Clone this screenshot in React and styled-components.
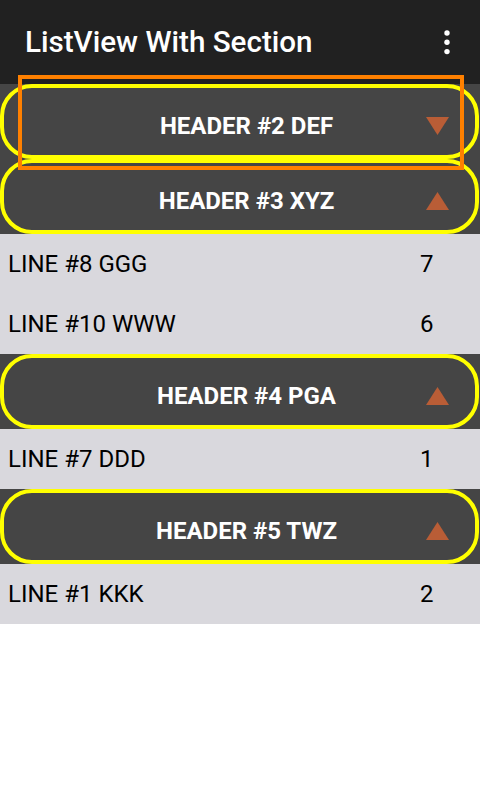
import React from "react";
import styled, { createGlobalStyle } from "styled-components";

const Global = createGlobalStyle`
  html, body { margin: 0; padding: 0; background: #ffffff; }
  body { font-family: Roboto, "Liberation Sans", sans-serif; }
  * { box-sizing: border-box; }
`;

const Screen = styled.div`
  width: 480px;
  min-height: 800px;
  background: #ffffff;
  display: flex;
  flex-direction: column;
`;

const AppBar = styled.header`
  height: 84px;
  background: #212121;
  display: flex;
  align-items: center;
  justify-content: space-between;
  padding: 0 27px 0 25px;
`;

const Title = styled.h1`
  margin: 0;
  color: #ffffff;
  font-family: Roboto, sans-serif;
  font-weight: 500;
  font-size: 29.6px;
  letter-spacing: 0;
`;

const MoreButton = styled.div`
  width: 12px;
  height: 30px;
  display: flex;
  align-items: center;
  justify-content: center;
`;

const List = styled.div`
  position: relative;
  display: flex;
  flex-direction: column;
`;

const HeaderBand = styled.div`
  height: 75px;
  background: #454545;
  display: flex;
  padding: 0 1px 0 0;
`;

const Pill = styled.div`
  flex: 1;
  border: 4px solid #ffff00;
  border-radius: 32px;
  display: flex;
  align-items: center;
  padding: 8px 26px 0 63px;
`;

const HeaderText = styled.span`
  flex: 1;
  text-align: center;
  color: #ffffff;
  font-family: Roboto, sans-serif;
  font-weight: 700;
  font-size: 24px;
`;

const Arrow = styled.svg`
  width: 23px;
  height: 18px;
  display: block;
  transform: ${(p) => (p.$down ? "rotate(180deg)" : "none")};
`;

const Row = styled.div`
  height: 60px;
  background: #d9d8dd;
  display: flex;
  align-items: center;
  padding-left: 8px;
  color: #000000;
  font-family: Roboto, sans-serif;
  font-size: 24px;
`;

const RowName = styled.span`
  flex: 1;
`;

const RowCount = styled.span`
  width: 60px;
`;

const Highlight = styled.div`
  position: absolute;
  left: 18px;
  top: -9px;
  width: 446px;
  height: 95px;
  border: 4px solid #ff8000;
  pointer-events: none;
`;

const sections = [
  { title: "HEADER #2 DEF", open: false, rows: [] },
  {
    title: "HEADER #3 XYZ",
    open: true,
    rows: [
      ["LINE #8 GGG", "7"],
      ["LINE #10 WWW", "6"],
    ],
  },
  { title: "HEADER #4 PGA", open: true, rows: [["LINE #7 DDD", "1"]] },
  { title: "HEADER #5 TWZ", open: true, rows: [["LINE #1 KKK", "2"]] },
];

function Triangle({ down }) {
  return (
    <Arrow $down={down} viewBox="0 0 23 18">
      <polygon points="11.5,0 23,18 0,18" fill="#b95d36" />
    </Arrow>
  );
}

export default function App() {
  return (
    <>
      <Global />
      <Screen>
        <AppBar>
          <Title>ListView With Section</Title>
          <MoreButton>
            <svg width="6" height="25" viewBox="0 0 6 25">
              <circle cx="3" cy="3" r="2.7" fill="#fff" />
              <circle cx="3" cy="12.3" r="2.7" fill="#fff" />
              <circle cx="3" cy="21.6" r="2.7" fill="#fff" />
            </svg>
          </MoreButton>
        </AppBar>
        <List>
          {sections.map((s) => (
            <React.Fragment key={s.title}>
              <HeaderBand>
                <Pill>
                  <HeaderText>{s.title}</HeaderText>
                  <Triangle down={!s.open} />
                </Pill>
              </HeaderBand>
              {s.rows.map(([name, count]) => (
                <Row key={name}>
                  <RowName>{name}</RowName>
                  <RowCount>{count}</RowCount>
                </Row>
              ))}
            </React.Fragment>
          ))}
          <Highlight />
        </List>
      </Screen>
    </>
  );
}
